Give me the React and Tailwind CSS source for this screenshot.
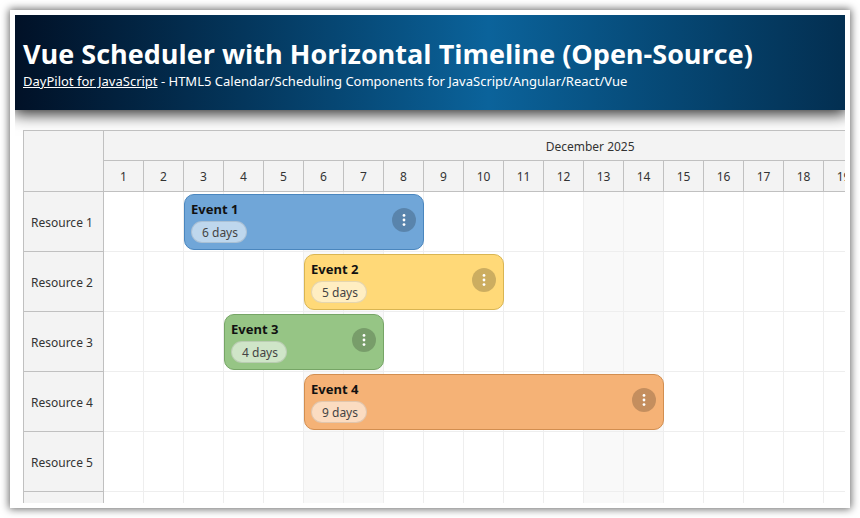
import React from "react";

const days = Array.from({ length: 19 }, (_, i) => i + 1);
const weekend = [6, 7, 13, 14];

const resources = [
  {
    name: "Resource 1",
    event: { title: "Event 1", start: 3, length: 6, color: "bg-[#70a6d8] border-[#4a86be]" }
  },
  {
    name: "Resource 2",
    event: { title: "Event 2", start: 6, length: 5, color: "bg-[#ffd978] border-[#d9b552]" }
  },
  {
    name: "Resource 3",
    event: { title: "Event 3", start: 4, length: 4, color: "bg-[#96c585] border-[#76a566]" }
  },
  {
    name: "Resource 4",
    event: { title: "Event 4", start: 6, length: 9, color: "bg-[#f5b276] border-[#d28e50]" }
  },
  { name: "Resource 5" },
  { name: "" }
];

const CELL = 40;

function EventBox({ event }) {
  return (
    <div
      className={`absolute left-0 top-0.5 z-10 h-14 rounded-[10px] border pl-1.5 pt-[5px] text-left ${event.color}`}
      style={{ width: event.length * CELL }}
    >
      <div className="text-[13px] leading-[18px] font-bold text-[#111]">{event.title}</div>
      <span className="mt-[3px] inline-flex h-[22px] items-center rounded-full border border-black/10 bg-white/55 pl-2.5 pr-2 pt-0.5 text-[12px] text-[#444]">
        {event.length} days
      </span>
      <button
        type="button"
        aria-label={`${event.title} menu`}
        className="absolute right-[7px] top-[13px] flex size-6 items-center justify-center rounded-full bg-black/20"
      >
        <svg viewBox="0 0 24 24" className="size-6" fill="#fff">
          <circle cx="12" cy="7.4" r="1.4" />
          <circle cx="12" cy="12" r="1.4" />
          <circle cx="12" cy="16.6" r="1.4" />
        </svg>
      </button>
    </div>
  );
}

function Scheduler() {
  return (
    <table className="table-fixed border-separate border-spacing-0 border-l border-t border-[#c0c0c0] w-[841px] text-[12px] text-[#333]">
      <colgroup>
        <col className="w-20" />
        {days.map(d => <col key={d} className="w-10" />)}
      </colgroup>
      <thead>
        <tr>
          <td rowSpan={2} className="border-r border-b border-[#c0c0c0] bg-[#f3f3f3]"></td>
          <th colSpan={19} className="h-[30px] border-b border-[#c0c0c0] bg-[#f3f3f3] p-0 pt-0.5 pl-[212px] text-center font-normal">
            December 2025
          </th>
        </tr>
        <tr>
          {days.map(d => (
            <th key={d} className="h-[31px] border-r border-b border-[#c0c0c0] bg-[#f3f3f3] p-0 pt-0.5 font-normal">
              {d}
            </th>
          ))}
        </tr>
      </thead>
      <tbody>
        {resources.map(r => (
          <tr key={r.name}>
            <th className="h-[60px] border-r border-b border-[#c0c0c0] bg-[#f3f3f3] p-0 pt-0.5 pl-[7px] text-left font-normal whitespace-nowrap">
              {r.name}
            </th>
            {days.map(d => (
              <td
                key={d}
                className={`relative border-r border-b border-[#eee] p-0 align-top ${
                  weekend.includes(d) ? "bg-[#f9f9f9]" : "bg-white"
                }`}
              >
                {r.event && r.event.start === d && <EventBox event={r.event} />}
              </td>
            ))}
          </tr>
        ))}
      </tbody>
    </table>
  );
}

function App() {
  return (
    <div className="flex h-screen flex-col bg-white p-2.5 font-['Noto_Sans','Open_Sans',sans-serif]">
      <div className="flex min-h-0 flex-1 flex-col bg-white p-[5px] shadow-[0_0_8px_1px_rgba(0,0,0,0.6)]">
        <div className="min-h-0 flex-1 overflow-hidden">
          <header className="bg-linear-to-r from-[#011127] via-[#0b639b] via-57% to-[#032f51] px-2 pt-5 pb-5 text-white shadow-[0_2px_15px_2px_rgba(0,0,0,0.85)]">
            <h1 className="font-['Open_Sans','Noto_Sans',sans-serif] text-[27px] leading-[38px] font-bold whitespace-nowrap">
              Vue Scheduler with Horizontal Timeline (Open-Source)
            </h1>
            <p className="text-[13px] leading-[17px] whitespace-nowrap">
              <a href="#" className="underline">DayPilot for JavaScript</a> - HTML5 Calendar/Scheduling
              Components for JavaScript/Angular/React/Vue
            </p>
          </header>
          <main className="px-2 pt-5">
            <Scheduler />
          </main>
        </div>
      </div>
    </div>
  );
}

export default App;
